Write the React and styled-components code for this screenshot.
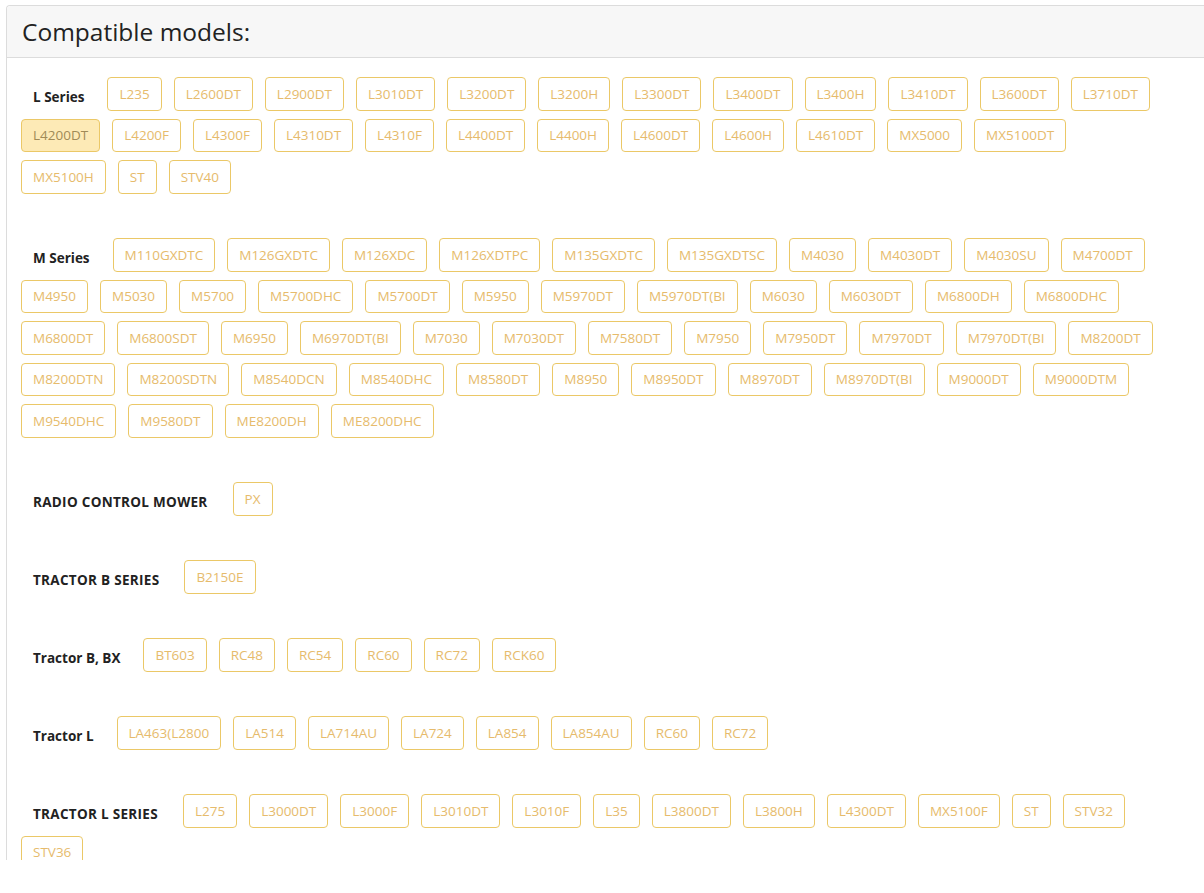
import React from 'react'
import styled, { createGlobalStyle } from 'styled-components'

const Global = createGlobalStyle`
  body {
    margin: 0;
    background: #fff;
    overflow: hidden;
    font-family: 'Open Sans', 'Noto Sans', sans-serif;
  }
`

const Card = styled.div`
  margin: 5px 0 0 6px;
  width: 1204px;
  height: 855px;
  border: 1px solid #dcdcdc;
  border-bottom: 0;
  border-radius: 4px 4px 0 0;
  box-sizing: border-box;
`

const Header = styled.div`
  height: 52px;
  background: #f7f7f7;
  border-bottom: 1px solid #dcdcdc;
  border-radius: 4px 4px 0 0;
  display: flex;
  align-items: center;
  padding: 0 15px;
  box-sizing: border-box;
`

const Title = styled.h3`
  margin: 0;
  font-size: 24.5px;
  font-weight: 500;
  color: #222;
`

const Body = styled.div`
  padding: 19px 39px 0 14px;
`

const Section = styled.div`
  display: flex;
  flex-wrap: wrap;
  align-items: center;
  margin-bottom: 36.5px;
`

const Label = styled.div`
  padding: 6px ${p => (p.$caps ? 13 : 11)}px 0 12px;
  margin: 0 12px 8px 0;
  font-size: 13.5px;
  letter-spacing: ${p => (p.$caps ? 0.3 : 0)}px;
  font-weight: 700;
  color: #222;
`

const Model = styled.span`
  display: inline-flex;
  align-items: center;
  height: 33.5px;
  padding: 0 11px;
  margin: 0 12px 8px 0;
  box-sizing: border-box;
  border: 1px solid #ebc867;
  border-radius: 4px;
  font-size: 13.5px;
  color: ${p => (p.$active ? '#a08a57' : '#e6bb6c')};
  background: ${p => (p.$active ? '#fdeab6' : '#fff')};
  white-space: nowrap;
`

const groups = [
  {
    name: 'L Series',
    models: ['L235', 'L2600DT', 'L2900DT', 'L3010DT', 'L3200DT', 'L3200H', 'L3300DT', 'L3400DT', 'L3400H', 'L3410DT', 'L3600DT', 'L3710DT', 'L4200DT', 'L4200F', 'L4300F', 'L4310DT', 'L4310F', 'L4400DT', 'L4400H', 'L4600DT', 'L4600H', 'L4610DT', 'MX5000', 'MX5100DT', 'MX5100H', 'ST', 'STV40']
  },
  {
    name: 'M Series',
    models: ['M110GXDTC', 'M126GXDTC', 'M126XDC', 'M126XDTPC', 'M135GXDTC', 'M135GXDTSC', 'M4030', 'M4030DT', 'M4030SU', 'M4700DT', 'M4950', 'M5030', 'M5700', 'M5700DHC', 'M5700DT', 'M5950', 'M5970DT', 'M5970DT(BI', 'M6030', 'M6030DT', 'M6800DH', 'M6800DHC', 'M6800DT', 'M6800SDT', 'M6950', 'M6970DT(BI', 'M7030', 'M7030DT', 'M7580DT', 'M7950', 'M7950DT', 'M7970DT', 'M7970DT(BI', 'M8200DT', 'M8200DTN', 'M8200SDTN', 'M8540DCN', 'M8540DHC', 'M8580DT', 'M8950', 'M8950DT', 'M8970DT', 'M8970DT(BI', 'M9000DT', 'M9000DTM', 'M9540DHC', 'M9580DT', 'ME8200DH', 'ME8200DHC']
  },
  { name: 'RADIO CONTROL MOWER', models: ['PX'] },
  { name: 'TRACTOR B SERIES', models: ['B2150E'] },
  { name: 'Tractor B, BX', models: ['BT603', 'RC48', 'RC54', 'RC60', 'RC72', 'RCK60'] },
  { name: 'Tractor L', models: ['LA463(L2800', 'LA514', 'LA714AU', 'LA724', 'LA854', 'LA854AU', 'RC60', 'RC72'] },
  {
    name: 'TRACTOR L SERIES',
    models: ['L275', 'L3000DT', 'L3000F', 'L3010DT', 'L3010F', 'L35', 'L3800DT', 'L3800H', 'L4300DT', 'MX5100F', 'ST', 'STV32', 'STV36']
  }
]

const App = () =>
  <>
    <Global />
    <Card>
      <Header>
        <Title>Compatible models:</Title>
      </Header>
      <Body>
        {groups.map(g =>
          <Section key={g.name}>
            <Label $caps={g.name === g.name.toUpperCase()}>{g.name}</Label>
            {g.models.map(m =>
              <Model key={m} $active={m === 'L4200DT' && g.name === 'L Series'}>{m}</Model>
            )}
          </Section>
        )}
      </Body>
    </Card>
  </>

export default App
